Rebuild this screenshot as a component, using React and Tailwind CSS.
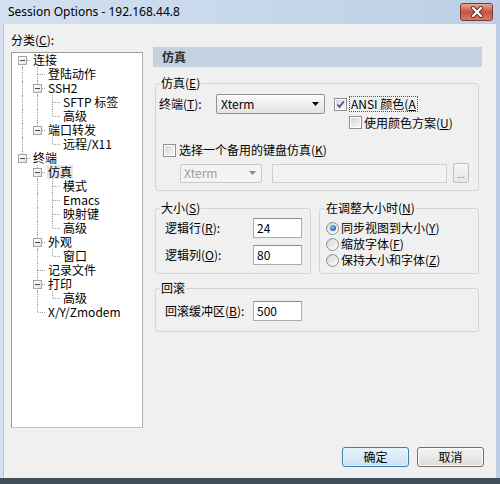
import { Fragment } from 'react';

// 会话选项对话框（SecureCRT 风格）
const rows = [
  { t: '连接', l: 0, kids: true },
  { t: '登陆动作', l: 1 },
  { t: 'SSH2', l: 1, kids: true },
  { t: 'SFTP 标签', l: 2 },
  { t: '高级', l: 2 },
  { t: '端口转发', l: 1, kids: true },
  { t: '远程/X11', l: 2 },
  { t: '终端', l: 0, kids: true },
  { t: '仿真', l: 1, kids: true, sel: true },
  { t: '模式', l: 2 },
  { t: 'Emacs', l: 2 },
  { t: '映射键', l: 2 },
  { t: '高级', l: 2 },
  { t: '外观', l: 1, kids: true },
  { t: '窗口', l: 2 },
  { t: '记录文件', l: 1 },
  { t: '打印', l: 1, kids: true },
  { t: '高级', l: 2 },
  { t: 'X/Y/Zmodem', l: 1 },
];

function hasNextAt(i, k) {
  for (let j = i + 1; j < rows.length; j++) {
    if (rows[j].l < k) return false;
    if (rows[j].l === k) return true;
  }
  return false;
}

function TreeRow({ r, i }) {
  return (
    <div className="flex h-[14px] items-center">
      {Array.from({ length: r.l }).map((_, k) => (
        <div key={k} className="relative h-full w-[15px] shrink-0">
          {hasNextAt(i, k) && (
            <span className="absolute left-[7px] top-0 h-full border-l border-dotted border-[#a0a0a0]" />
          )}
        </div>
      ))}
      <div className="relative h-full w-[15px] shrink-0">
        {i > 0 && <span className="absolute left-[7px] top-0 h-[7px] border-l border-dotted border-[#a0a0a0]" />}
        {hasNextAt(i, r.l) && (
          <span className="absolute left-[7px] top-[7px] h-[7px] border-l border-dotted border-[#a0a0a0]" />
        )}
        <span className="absolute left-[8px] top-[7px] w-[7px] border-t border-dotted border-[#a0a0a0]" />
        {r.kids && (
          <span className="absolute left-[3px] top-[3px] flex h-[9px] w-[9px] items-center justify-center border border-[#a5a5a5] bg-gradient-to-br from-white to-[#e4e4e4]">
            <span className="h-px w-[5px] bg-[#4a4a4a]" />
          </span>
        )}
      </div>
      <span
        className={`ml-[2px] whitespace-nowrap px-[1px] text-[12px] leading-[14px] text-black ${
          r.sel ? 'bg-[#e6e6e6]' : ''
        }`}
      >
        {r.t}
      </span>
    </div>
  );
}

function Check({ checked }) {
  return (
    <span className="relative flex h-[13px] w-[13px] shrink-0 items-center justify-center border border-[#8e8f8f] bg-white">
      <span className="h-[9px] w-[9px] bg-gradient-to-br from-[#d6d6d6] to-[#f8f8f8]" />
      {checked && (
        <svg className="absolute left-0 top-0" width="11" height="11" viewBox="0 0 11 11">
          <path d="M2.5 5.5 L4.5 8 L8.8 2.5" fill="none" stroke="#3b4f86" strokeWidth="1.6" />
        </svg>
      )}
    </span>
  );
}

function Radio({ checked }) {
  return (
    <span className="flex h-[13px] w-[13px] shrink-0 items-center justify-center rounded-full border border-[#8e8f8f] bg-gradient-to-br from-[#d8d8d8] to-[#fafafa]">
      {checked && (
        <span className="h-[6px] w-[6px] rounded-full bg-[radial-gradient(circle_at_40%_35%,#8cc4f2,#1f5fae_70%)]" />
      )}
    </span>
  );
}

function Arrow({ color = '#000' }) {
  return (
    <svg width="7" height="4" viewBox="0 0 7 4">
      <polygon points="0,0 7,0 3.5,4" fill={color} />
    </svg>
  );
}

function Input({ value }) {
  return (
    <div className="flex h-[20px] w-[49px] items-center border border-[#abadb3] border-t-[#8a8d95] bg-white pl-[3px] text-[12px] leading-[14px]">
      {value}
    </div>
  );
}

function Legend({ children, className = '' }) {
  return <legend className={`ml-[4px] px-[1px] text-[12px] leading-[16px] ${className}`}>{children}</legend>;
}

export default function App() {
  return (
    <div className="flex h-[484px] w-[500px] flex-col overflow-hidden bg-gradient-to-r from-[#d3e0f0] to-[#bccfe6] font-['Noto_Sans_CJK_SC',sans-serif] text-black">
      {/* 标题栏 */}
      <div className="flex h-[24px] shrink-0 items-start">
        <span className="mt-[4px] pl-[8px] font-['Noto_Sans',sans-serif] text-[12px] leading-[16px] text-black">
          Session Options - 192.168.44.8
        </span>
        <div className="ml-auto mr-[7px] mt-[3px] flex h-[18px] w-[33px] items-center justify-center rounded-[3px] border border-[#7b3a33] bg-gradient-to-b from-[#e9a99c] via-[#c8503e] to-[#d77a66]">
          <svg width="14" height="12" viewBox="0 0 14 12">
            <path d="M3 2 L11 10 M11 2 L3 10" stroke="#5a2a24" strokeWidth="4" strokeLinecap="round" />
            <path d="M3 2 L11 10 M11 2 L3 10" stroke="#fff" strokeWidth="2.4" strokeLinecap="round" />
          </svg>
        </div>
      </div>

      {/* 客户区 */}
      <div className="ml-[3px] flex h-[454px] w-[493px] flex-col border-l border-[#b9c4cf] bg-[#f0f0f0] pl-[7px] pt-[8px]">
        <div className="flex">
          {/* 左侧分类树 */}
          <div className="w-[132px] shrink-0">
            <div className="h-[16px] text-[12px] leading-[16px]">
              分类(<u>C</u>):
            </div>
            <div className="mt-[4px] h-[376px] border border-[#9a9a9a] border-b-[#c4c4c4] border-r-[#b0b0b0] bg-white pl-[3px]">
              {rows.map((r, i) => (
                <TreeRow key={i} r={r} i={i} />
              ))}
            </div>
          </div>

          {/* 右侧设置 */}
          <div className="ml-[10px] mt-[15px] w-[329px] shrink-0">
            <div className="flex h-[20px] items-center bg-[#c3d1e0] pl-[9px] text-[12px] font-bold leading-[16px] text-[#2e2e2e]">
              仿真
            </div>

            <fieldset className="ml-[2px] mt-[8px] w-[324px] rounded-[3px] border border-[#d5d5d5] pb-[7px]">
              <Legend>
                仿真(<u>E</u>)
              </Legend>
              <div className="mt-[3px] flex h-[20px] items-center pl-[3px]">
                <span className="w-[57px] text-[12px] leading-[14px]">
                  终端(<u>T</u>):
                </span>
                <div className="flex h-[20px] w-[109px] items-center justify-between rounded-[2px] border border-[#8f9399] bg-gradient-to-b from-[#fbfbfb] to-[#e3e3e3] pl-[4px] pr-[5px] text-[12px] leading-[14px]">
                  <span>Xterm</span>
                  <Arrow />
                </div>
                <span className="ml-[9px]">
                  <Check checked />
                </span>
                <span className="ml-[2px] border border-dotted border-[#555] px-[1px] text-[12px] leading-[14px]">
                  ANSI 颜色(<u>A</u>
                </span>
              </div>
              <div className="mt-[2px] flex h-[13px] items-center pl-[193px]">
                <Check />
                <span className="ml-[2px] whitespace-nowrap text-[12px] leading-[14px]">
                  使用颜色方案(<u>U</u>)
                </span>
              </div>
              <div className="mt-[13px] flex h-[16px] items-center pl-[7px]">
                <Check />
                <span className="ml-[3px] text-[12px] leading-[14px]">
                  选择一个备用的键盘仿真(<u>K</u>)
                </span>
              </div>
              <div className="mt-[5px] flex h-[20px] items-center pl-[24px]">
                <div className="flex h-[19px] w-[82px] items-center justify-between rounded-[2px] border border-[#c9c9c9] bg-[#f4f4f4] pl-[3px] pr-[5px] text-[12px] leading-[14px] text-[#9c9c9c]">
                  <span>Xterm</span>
                  <Arrow color="#8a8a8a" />
                </div>
                <div className="ml-[10px] h-[19px] w-[175px] border border-[#cfcfcf] bg-[#f2f2f2]" />
                <div className="ml-[6px] flex h-[20px] w-[16px] items-end justify-center rounded-[2px] border border-[#c0c0c0] bg-gradient-to-b from-[#f6f6f6] to-[#e6e6e6] pb-[3px] text-[9px] leading-[9px] text-[#8a8a8a]">
                  ...
                </div>
              </div>
            </fieldset>

            <div className="ml-[2px] mt-[9px] flex gap-[8px]">
              <fieldset className="w-[156px] rounded-[3px] border border-[#d5d5d5] pb-[8px]">
                <Legend>
                  大小(<u>S</u>)
                </Legend>
                <div className="mt-[2px] flex h-[20px] items-center pl-[9px]">
                  <span className="w-[88px] text-[12px] leading-[14px]">
                    逻辑行(<u>R</u>):
                  </span>
                  <Input value="24" />
                </div>
                <div className="mt-[7px] flex h-[20px] items-center pl-[9px]">
                  <span className="w-[88px] text-[12px] leading-[14px]">
                    逻辑列(<u>O</u>):
                  </span>
                  <Input value="80" />
                </div>
              </fieldset>
              <fieldset className="w-[160px] rounded-[3px] border border-[#d5d5d5]">
                <Legend className="ml-[5px]">
                  在调整大小时(<u>N</u>)
                </Legend>
                <div className="mt-[4px] pl-[6px]">
                  {[
                    ['同步视图到大小', 'Y', true],
                    ['缩放字体', 'F', false],
                    ['保持大小和字体', 'Z', false],
                  ].map(([label, key, on]) => (
                    <div key={key} className="flex h-[16px] items-center">
                      <Radio checked={on} />
                      <span className="ml-[2px] whitespace-nowrap text-[12px] leading-[14px]">
                        {label}(<u>{key}</u>)
                      </span>
                    </div>
                  ))}
                </div>
              </fieldset>
            </div>

            <fieldset className="ml-[2px] mt-[6px] w-[324px] rounded-[3px] border border-[#d5d5d5] pb-[10px]">
              <Legend>回滚</Legend>
              <div className="mt-[5px] flex h-[20px] items-center pl-[9px]">
                <span className="w-[88px] text-[12px] leading-[14px]">
                  回滚缓冲区(<u>B</u>):
                </span>
                <Input value="500" />
              </div>
            </fieldset>
          </div>
        </div>

        {/* 底部按钮 */}
        <div className="mt-auto flex justify-end gap-[8px] pb-[11px] pr-[12px]">
          <button className="flex h-[20px] w-[67px] items-center justify-center rounded-[3px] border border-[#3c7fb1] bg-gradient-to-b from-[#eaf4fb] to-[#c9e0f2] text-[12px] leading-[14px] text-black shadow-[inset_0_0_0_1px_#e3f1fb]">
            确定
          </button>
          <button className="flex h-[20px] w-[67px] items-center justify-center rounded-[3px] border border-[#707070] bg-gradient-to-b from-[#f4f4f4] to-[#dcdcdc] text-[12px] leading-[14px] text-black shadow-[inset_0_0_0_1px_#fbfbfb]">
            取消
          </button>
        </div>
      </div>
      <div className="h-[6px] shrink-0 bg-[#3e4e5a]" />
    </div>
  );
}
